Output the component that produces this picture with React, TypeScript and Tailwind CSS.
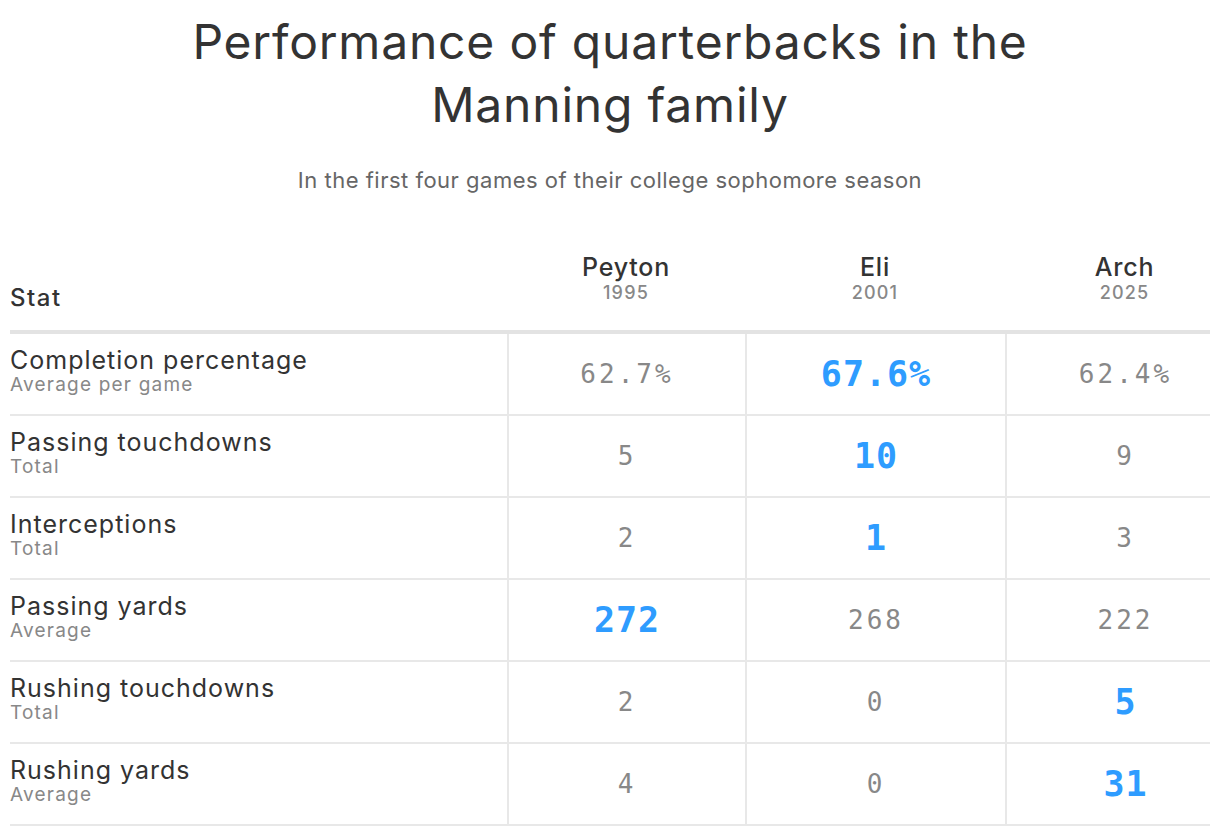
const rows = [
  { label: "Completion percentage", sub: "Average per game", values: ["62.7%", "67.6%", "62.4%"], best: 1 },
  { label: "Passing touchdowns", sub: "Total", values: ["5", "10", "9"], best: 1 },
  { label: "Interceptions", sub: "Total", values: ["2", "1", "3"], best: 1 },
  { label: "Passing yards", sub: "Average", values: ["272", "268", "222"], best: 0 },
  { label: "Rushing touchdowns", sub: "Total", values: ["2", "0", "5"], best: 2 },
  { label: "Rushing yards", sub: "Average", values: ["4", "0", "31"], best: 2 },
];

const players = [
  { name: "Peyton", year: "1995" },
  { name: "Eli", year: "2001" },
  { name: "Arch", year: "2025" },
];

const cols = "grid grid-cols-[497px_238px_260px_205px]";

export default function App() {
  return (
    <div className="min-h-[834px] bg-white font-['Inter',sans-serif] text-[#333]">
      <div className="px-[10px] pt-[10px]">
        <h1 className="text-center text-[48px] leading-[63px] font-normal tracking-[0.8px] text-[#333]">
          Performance of quarterbacks in the
          <br />
          Manning family
        </h1>
        <p className="mt-[30px] text-center text-[22px] leading-[28px] tracking-[0.5px] text-[#666]">
          In the first four games of their college sophomore season
        </p>

        <div className="mt-[48px] w-[1200px]">
          <div className={`${cols} h-[92px] border-b-4 border-[#e3e3e3] pb-[20px]`}>
            <div className="flex items-end text-[24px] font-medium leading-none tracking-[1.5px]">Stat</div>
            {players.map((p, i) => (
              <div
                key={p.name}
                className={`flex flex-col items-center justify-end pb-[6px] ${i === 2 ? "pl-[34px]" : ""}`}
              >
                <span className="text-[25px] font-medium leading-[30px] tracking-[0.8px]">{p.name}</span>
                <span className="text-[18px] leading-[22px] font-medium tracking-[1.2px] text-[#888]">{p.year}</span>
              </div>
            ))}
          </div>

          {rows.map((r) => (
            <div key={r.label} className={`${cols} h-[82px] border-b-2 border-[#e8e8e8]`}>
              <div className="flex flex-col justify-center pb-[6px]">
                <span className="text-[25px] leading-[28px] tracking-[1px]">{r.label}</span>
                <span className="text-[19px] leading-[22px] tracking-[1.2px] text-[#888]">{r.sub}</span>
              </div>
              {r.values.map((v, i) => (
                <div
                  key={i}
                  className={`flex items-center justify-center border-l-2 border-[#e8e8e8] ${i === 2 ? "pl-[34px]" : ""}`}
                >
                  {i === r.best ? (
                    <span className="font-['DejaVu_Sans_Mono',monospace] text-[35px] font-bold tracking-[1px] text-[#2e9cff]">
                      {v}
                    </span>
                  ) : (
                    <span className="font-['DejaVu_Sans_Mono',monospace] text-[26px] tracking-[3px] text-[#888]">
                      {v}
                    </span>
                  )}
                </div>
              ))}
            </div>
          ))}
        </div>
      </div>
    </div>
  );
}
